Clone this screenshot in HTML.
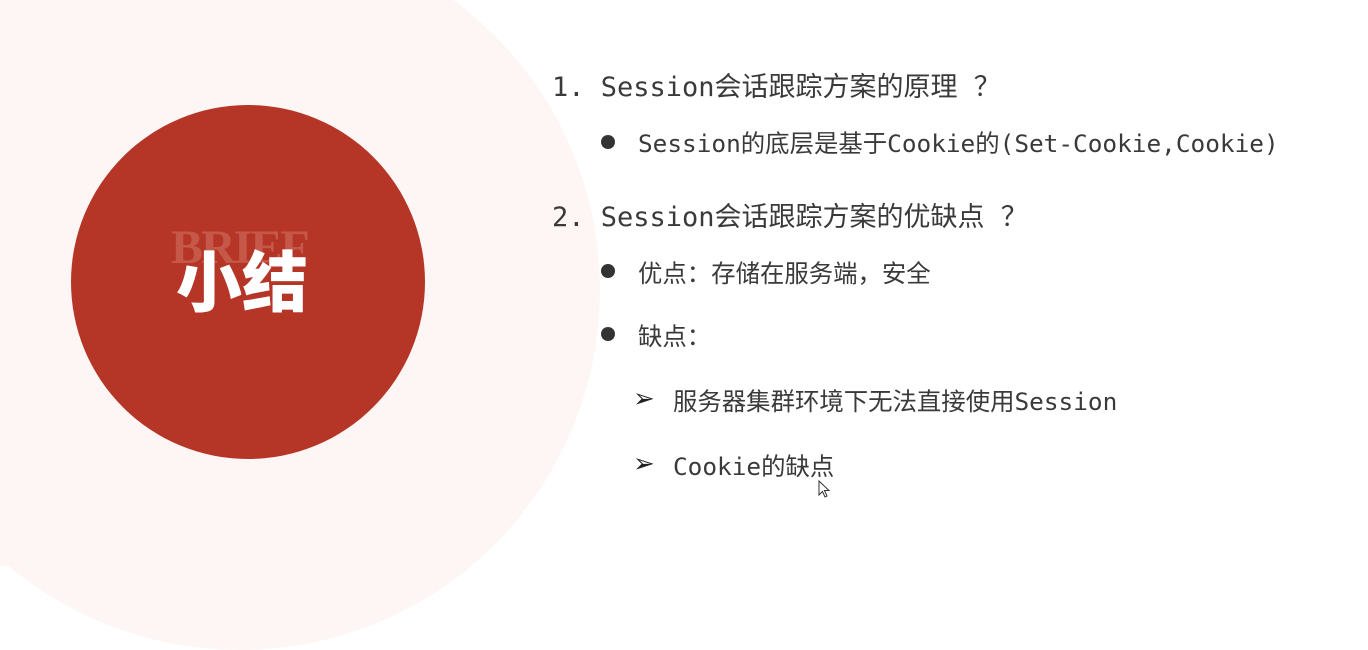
<!DOCTYPE html>
<html><head><meta charset="utf-8"><style>
html,body{margin:0;padding:0}
body{width:1368px;height:566px;overflow:hidden;position:relative;background:#fff;font-family:"DejaVu Sans Mono","Noto Sans CJK SC",monospace;color:#3a3a3a}
.bg{position:absolute;left:-120px;top:-70px;width:720px;height:720px;border-radius:50%;background:#fdf6f5}
.bg2{position:absolute;left:0;top:0;width:300px;height:566px;background:#fdf6f5}
.c{position:absolute;left:71px;top:105px;width:354px;height:354px;border-radius:50%;background:#b53627}
.brief{position:absolute;left:171px;top:220px;font-family:"Liberation Serif",serif;font-weight:bold;font-size:48px;color:#d77a6e;opacity:.5;letter-spacing:-2px}
.xj{position:absolute;left:176px;top:238px;font-family:"Noto Sans CJK SC",sans-serif;font-weight:900;font-size:66px;color:#fff;line-height:80px}
.t{position:absolute;white-space:nowrap;line-height:1}
.h{font-size:27px}
.s{font-size:24.4px}
.dot{position:absolute;width:14px;height:14px;border-radius:50%;background:#333}
.ar{position:absolute;font-size:26px;color:#222;font-family:"DejaVu Sans",sans-serif;line-height:1;font-weight:bold}
</style></head><body>
<div class="bg2"></div>
<div class="bg"></div>
<div class="c"></div>
<div class="brief">BRIEF</div>
<div class="xj">小结</div>

<div class="t h" style="left:552px;top:74px">1. Session会话跟踪方案的原理 ？</div>
<div class="dot" style="left:601px;top:135px"></div>
<div class="t s" style="left:638px;top:132px">Session的底层是基于Cookie的(Set-Cookie,Cookie)</div>

<div class="t h" style="left:552px;top:204px">2. Session会话跟踪方案的优缺点 ？</div>
<div class="dot" style="left:601px;top:264px"></div>
<div class="t s" style="left:638px;top:262px">优点：存储在服务端，安全</div>
<div class="dot" style="left:601px;top:327px"></div>
<div class="t s" style="left:638px;top:325px">缺点：</div>

<div class="ar" style="left:633px;top:386px">➢</div>
<div class="t s" style="left:673px;top:390px">服务器集群环境下无法直接使用Session</div>
<div class="ar" style="left:633px;top:451px">➢</div>
<div class="t s" style="left:673px;top:455px">Cookie的缺点</div>
<svg style="position:absolute;left:818px;top:480px" width="14" height="20" viewBox="0 0 14 20"><path d="M1 1 L1 15 L4.5 11.5 L7 17 L9 16 L6.5 10.5 L11 10.5 Z" fill="#fff" stroke="#333" stroke-width="1"/></svg>
</body></html>
